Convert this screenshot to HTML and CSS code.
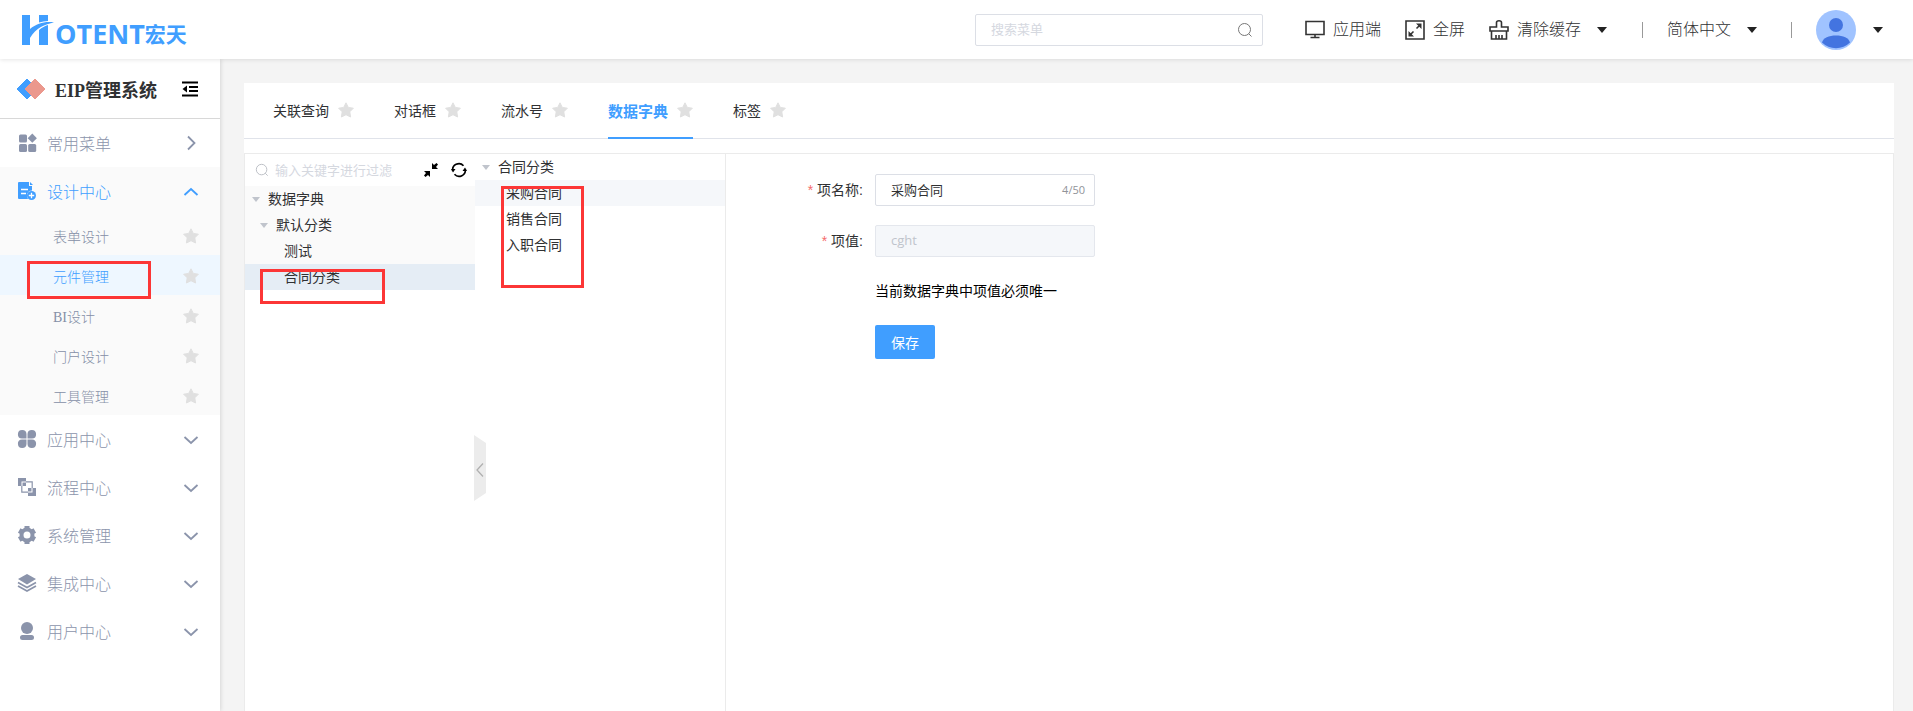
FILE: index.html
```
<!DOCTYPE html>
<html lang="zh-CN">
<head>
    <meta charset="UTF-8">
    <meta name="viewport" content="width=device-width, initial-scale=1.0">
    <title>EIP管理系统</title>
    <link rel="stylesheet" href="styles.css">
</head>
<body>

<svg class="sprite" aria-hidden="true">
    <symbol id="star" viewBox="0 0 16 16"><path d="M8 .8l2.300 4.600 5.100.8-3.600 3.600.8 5.200L8 12.700l-4.600 2.300.8-5.200L.6 6.200l5.100-.8z" fill="#e0e0e0" stroke="#e0e0e0" stroke-linejoin="round"/></symbol>
    <symbol id="down" viewBox="0 0 16 16"><path d="M1.500 6L8 12l6.500-6" fill="none" stroke="currentColor" stroke-width="1.800"/></symbol>
    <symbol id="up" viewBox="0 0 16 16"><path d="M1.500 12L8 6l6.500 6" fill="none" stroke="currentColor" stroke-width="1.800"/></symbol>
    <symbol id="right" viewBox="0 0 16 16"><path d="M5 1.500L11.500 8 5 14.500" fill="none" stroke="currentColor" stroke-width="1.800"/></symbol>
    <symbol id="search" viewBox="0 0 16 16"><circle cx="7.500" cy="7.500" r="6" fill="none" stroke="currentColor"/><path d="M11.700 11.700L14.500 14.500" stroke="currentColor"/></symbol>
</svg>

<header class="topbar">
    <a class="logo" href="#" aria-label="HOTENT宏天">
        <svg width="34" height="32" viewBox="0 0 34 32" fill="#409eff">
            <path d="M1 1h8v14C16 9 25 7 33 8.500 24 10 15 14 9 24v7H1z"/>
            <path d="M18 1h9v6c-3 0-6 .5-9 1.500zM18 16c3-2.500 6-4 9-5V31h-9z"/>
        </svg>
        <span class="logo-en">OTENT</span><span class="logo-cn">宏天</span>
    </a>
    <div class="top-search">
        <input type="text" placeholder="搜索菜单" aria-label="搜索菜单">
        <svg class="i16"><use href="#search"/></svg>
    </div>
    <nav class="top-actions">
        <button class="action">
            <svg width="20" height="20" viewBox="0 0 20 20" fill="none" stroke="#333" stroke-width="1.600"><path d="M1 1.500h18v13H1zM10 14.500v3M5.500 17.500h9"/></svg>
            应用端
        </button>
        <button class="action">
            <svg width="20" height="20" viewBox="0 0 20 20" fill="none" stroke="#333" stroke-width="1.600"><path d="M1 1h18v18H1zM11.500 8.500l4-4M8.500 11.500l-4 4"/><path d="M11 3.500h5.500V9zM3.500 11v5.500H9z" fill="#333" stroke="none"/></svg>
            全屏
        </button>
        <button class="action clear">
            <svg width="20" height="20" viewBox="0 0 20 20" fill="none" stroke="#333" stroke-width="1.600"><path d="M1 11V7h6.500V2.500q0-1.700 2.500-1.700t2.500 1.700V7H19v4zM2.500 11v8h15v-8M7 19v-4M10 19v-4M13 19v-4"/></svg>
            清除缓存
            <i class="caret"></i>
        </button>
        <span class="line"></span>
        <button class="action lang">简体中文 <i class="caret"></i></button>
        <span class="line"></span>
        <button class="action user" aria-label="用户">
            <svg width="40" height="40" viewBox="0 0 40 40"><circle cx="20" cy="20" r="20" fill="#a0c3ff"/><circle cx="20" cy="15" r="7" fill="#4374e0"/><path d="M6 32.500C7 28 13 25.500 20 25.500S33 28 34 32.500A20 20 0 0 1 6 32.500z" fill="#4374e0"/></svg>
            <i class="caret"></i>
        </button>
    </nav>
</header>

<div class="layout">
    <aside class="sidebar">
        <div class="system">
            <svg width="30" height="22" viewBox="0 0 30 22"><path d="M11 1l10 10-10 10L1 11z" fill="#409eff" stroke="#409eff" stroke-linejoin="round"/><path d="M19 1l10 10-10 10L9 11z" fill="#eb988d" stroke="#eb988d" stroke-linejoin="round"/></svg>
            <h1>EIP管理系统</h1>
            <button class="fold" aria-label="收起菜单">
                <svg width="16" height="16" viewBox="0 0 16 16"><path d="M0 1.500h16M7 6h9M7 10h9M0 14.500h16" stroke="#000" stroke-width="2"/><path d="M5 4.500v7L.5 8z"/></svg>
            </button>
        </div>
        <nav>
            <a class="menu" href="#">
                <svg width="20" height="20" viewBox="0 0 20 20" fill="currentColor"><rect x="2" y="1.500" width="8" height="8" rx="1.500"/><rect x="2" y="11" width="8" height="8" rx="1.500"/><rect x="11.200" y="11" width="8" height="8" rx="1.500"/><path d="M15.300.6l4.600 4.600-4.600 4.600-4.600-4.600z"/></svg>
                <span>常用菜单</span>
                <svg class="i16"><use href="#right"/></svg>
            </a>
            <div class="opened">
                <a class="menu active" href="#">
                    <svg width="20" height="20" viewBox="0 0 20 20"><path d="M2 1h10v4h3v4.500a5.200 5.200 0 0 0-4 8.500H2q-1 0-1-1V2q0-1 1-1z" fill="currentColor"/><path d="M13 1l3 3h-3z" fill="currentColor"/><path d="M4 8.500h7M4 12.500h5" stroke="#fff" stroke-width="1.300"/><circle cx="14.500" cy="14.500" r="4.500" fill="currentColor"/><path d="M14.500 11.800v5.400M11.800 14.500h5.400" stroke="#fff" stroke-width="1.300"/></svg>
                    <span>设计中心</span>
                    <svg class="i16"><use href="#up"/></svg>
                </a>
                <a class="sub" href="#"><span>表单设计</span><svg class="i16"><use href="#star"/></svg></a>
                <a class="sub current" href="#"><span>元件管理</span><svg class="i16"><use href="#star"/></svg><i class="mark mark-menu"></i></a>
                <a class="sub" href="#"><span>BI设计</span><svg class="i16"><use href="#star"/></svg></a>
                <a class="sub" href="#"><span>门户设计</span><svg class="i16"><use href="#star"/></svg></a>
                <a class="sub" href="#"><span>工具管理</span><svg class="i16"><use href="#star"/></svg></a>
            </div>
            <a class="menu" href="#">
                <svg width="20" height="20" viewBox="0 0 20 20" fill="currentColor"><path d="M9.500 9.500H5A4.300 4.300 0 1 1 9.500 5zM10.500 9.500V5A4.300 4.300 0 1 1 15 9.500zM9.500 10.500V15A4.300 4.300 0 1 1 5 10.500zM10.500 10.500H15A4.300 4.300 0 1 1 10.500 15z"/></svg>
                <span>应用中心</span>
                <svg class="i16"><use href="#down"/></svg>
            </a>
            <a class="menu" href="#">
                <svg width="20" height="20" viewBox="0 0 20 20"><path d="M1 1h8v3.500H4.500V9H1zM19 19h-8v-3.500h4.500V11H19zM5.500 5.500H9V9H5.500zM11 11h3.500v3.500H11z" fill="currentColor"/><path d="M9 4.800h6.200V11M4.800 9v6.200H11" fill="none" stroke="currentColor" stroke-width="1.200"/></svg>
                <span>流程中心</span>
                <svg class="i16"><use href="#down"/></svg>
            </a>
            <a class="menu" href="#">
                <svg width="20" height="20" viewBox="0 0 20 20"><circle cx="10" cy="10" r="5.500" fill="none" stroke="currentColor" stroke-width="4"/><path d="M10 1v3M10 16v3M2.200 5.500l2.600 1.500M15.200 13l2.600 1.500M2.200 14.500l2.600-1.500M15.200 7l2.600-1.500" stroke="currentColor" stroke-width="5"/></svg>
                <span>系统管理</span>
                <svg class="i16"><use href="#down"/></svg>
            </a>
            <a class="menu" href="#">
                <svg width="20" height="20" viewBox="0 0 20 20"><path d="M10 1l9 5-9 5.500L1 6z" fill="currentColor"/><path d="M1 9.500l9 5 9-5M1 13l9 5 9-5" fill="none" stroke="currentColor" stroke-width="1.700"/></svg>
                <span>集成中心</span>
                <svg class="i16"><use href="#down"/></svg>
            </a>
            <a class="menu" href="#">
                <svg width="20" height="20" viewBox="0 0 20 20" fill="currentColor"><circle cx="10" cy="7" r="6"/><rect x="3" y="14" width="14" height="5" rx="2.500"/></svg>
                <span>用户中心</span>
                <svg class="i16"><use href="#down"/></svg>
            </a>
        </nav>
    </aside>

    <main class="card">
        <nav class="tabs">
            <a href="#">关联查询<svg class="i16"><use href="#star"/></svg></a>
            <a href="#">对话框<svg class="i16"><use href="#star"/></svg></a>
            <a href="#">流水号<svg class="i16"><use href="#star"/></svg></a>
            <a class="active" href="#">数据字典<svg class="i16"><use href="#star"/></svg></a>
            <a href="#">标签<svg class="i16"><use href="#star"/></svg></a>
        </nav>

        <div class="panel">
            <section class="types">
                <div class="filter">
                    <svg class="i14"><use href="#search"/></svg>
                    <input type="text" placeholder="输入关键字进行过滤" aria-label="输入关键字进行过滤">
                    <button aria-label="全部收起">
                        <svg width="16" height="16" viewBox="0 0 16 16"><path d="M9 1v6h6l-2-2 2-2.500L13.500 1 11 3zM7 15V9H1l2 2-2 2.500L2.500 15 5 13z"/></svg>
                    </button>
                    <button aria-label="刷新">
                        <svg width="16" height="16" viewBox="0 0 16 16"><path d="M1.800 9A6.200 6.200 0 0 1 12.500 3.700M14.200 7A6.200 6.200 0 0 1 3.500 12.300" fill="none" stroke="#000" stroke-width="1.700"/><path d="M0 7h4.500L2 10.500zM16 9h-4.500L14 5.500z"/></svg>
                    </button>
                </div>
                <ul class="tree gray">
                    <li><i class="arrow"></i><span>数据字典</span></li>
                    <li class="level2"><i class="arrow"></i><span>默认分类</span></li>
                    <li class="level3"><span>测试</span></li>
                    <li class="level3 selected"><span>合同分类</span><i class="mark mark-type"></i></li>
                </ul>
                <button class="handle" aria-label="收起">
                    <svg width="8" height="14" viewBox="0 0 8 14"><path d="M7 .5L1 7l6 6.500" fill="none" stroke="#b0b0b0" stroke-width="1.300"/></svg>
                </button>
            </section>
            <section class="items">
                <ul class="tree">
                    <li><i class="arrow"></i><span>合同分类</span></li>
                    <li class="level2 hovered"><span>采购合同</span><i class="mark mark-items"></i></li>
                    <li class="level2"><span>销售合同</span></li>
                    <li class="level2"><span>入职合同</span></li>
                </ul>
            </section>
            <form class="detail">
                <label for="name"><b>*</b> 项名称:</label>
                <div class="field">
                    <input type="text" id="name" value="采购合同" maxlength="50">
                    <span class="count">4/50</span>
                </div>
                <label for="code"><b>*</b> 项值:</label>
                <div class="field">
                    <input type="text" id="code" value="cght" disabled>
                </div>
                <p class="hint">当前数据字典中项值必须唯一</p>
                <button type="button" class="save">保存</button>
            </form>
        </div>
    </main>
</div>

</body>
</html>
```
FILE: styles.css
```
* {
    box-sizing: border-box;
}

body {
    margin: 0;
    min-height: 100vh;
    display: flex;
    flex-direction: column;
    font-family: "Liberation Sans", "Noto Sans CJK SC", sans-serif;
    font-size: 14px;
    color: #303133;
    background: #f4f4f4;
}

a {
    color: inherit;
    text-decoration: none;
}

button,
input {
    font: inherit;
    color: inherit;
}

button {
    padding: 0;
    border: none;
    background: none;
    cursor: pointer;
}

svg {
    flex: none;
    display: block;
}

input::placeholder {
    color: #d5d8df;
    opacity: 1;
}

.sprite {
    position: absolute;
    width: 0;
    height: 0;
}

.i16 {
    width: 16px;
    height: 16px;
}

.i14 {
    width: 14px;
    height: 14px;
}

/* top bar */
.topbar {
    position: relative;
    z-index: 2;
    height: 59px;
    display: flex;
    align-items: center;
    padding: 0 30px 0 21px;
    background: #fff;
    box-shadow: 0 1px 4px rgba(0, 0, 0, 0.1);
}

.logo {
    display: flex;
    align-items: center;
    color: #409eff;
    line-height: 30px;
}

.logo-en {
    font-family: "Open Sans", sans-serif;
    font-size: 27px;
    font-weight: 700;
    padding-top: 8px;
}

.logo-cn {
    font-size: 21px;
    font-weight: 700;
    padding-top: 10px;
}

.top-search {
    position: relative;
    width: 288px;
    margin-left: auto;
    margin-right: 42px;
}

.top-search input {
    display: block;
    width: 100%;
    height: 32px;
    padding: 0 40px 0 15px;
    border: 1px solid #dcdfe6;
    border-radius: 2px;
    font-size: 13px;
}

.top-search svg {
    position: absolute;
    right: 10px;
    top: 8px;
    color: #777;
}

.top-actions,
.action {
    display: flex;
    align-items: center;
}

.action {
    gap: 8px;
    margin-right: 24px;
    font-size: 16px;
    font-weight: 300;
    line-height: 24px;
}

.clear {
    margin-right: 35px;
}

.clear .caret,
.lang .caret {
    margin-left: 8px;
}

.lang {
    margin: 0 34px 0 24px;
}

.user {
    gap: 17px;
    margin: 0 0 0 24px;
}

.caret {
    border: 5px solid transparent;
    border-top: 6px solid #222;
    border-bottom: none;
}

.line {
    width: 1px;
    height: 16px;
    background: #999;
}

/* sidebar */
.layout {
    flex: 1;
    display: flex;
}

.sidebar {
    position: relative;
    width: 220px;
    flex: none;
    background: #fff;
    box-shadow: 1px 0 4px rgba(0, 0, 0, 0.12);
    font-weight: 300;
}

.system {
    display: flex;
    align-items: center;
    height: 60px;
    padding: 0 22px 0 16px;
    border-bottom: 1px solid #d8d8d8;
}

.system h1 {
    margin: 0 auto 0 9px;
    font-family: "Liberation Serif", "Noto Sans CJK SC", serif;
    font-size: 18px;
    font-weight: 700;
}

.menu {
    display: flex;
    align-items: center;
    height: 48px;
    padding: 0 21px 0 17px;
    font-size: 16px;
    color: #8b94ab;
}

.menu span {
    flex: 1;
    margin-left: 10px;
}

.opened {
    background: #fafafa;
}

.menu.active {
    color: #409eff;
}

.sub {
    position: relative;
    display: flex;
    align-items: center;
    justify-content: space-between;
    height: 40px;
    padding: 2px 21px 0 53px;
    font-family: "Liberation Serif", "Noto Sans CJK SC", serif;
    color: #858fa7;
}

.sub.current {
    color: #409eff;
    background: #eef7ff;
}

/* red frames over the highlighted entries */
.mark {
    position: absolute;
    z-index: 1;
    border: 3px solid #fc3636;
    pointer-events: none;
}

.mark-menu {
    left: 27px;
    top: 6px;
    width: 124px;
    height: 38px;
}

.mark-type {
    left: 15px;
    top: 5px;
    width: 125px;
    height: 35px;
}

.mark-items {
    left: 26px;
    top: 6px;
    width: 83px;
    height: 102px;
}

/* content */
.card {
    flex: 1;
    display: flex;
    flex-direction: column;
    margin: 24px 19px 0 24px;
    background: #fff;
}

.tabs {
    display: flex;
    gap: 40px;
    height: 56px;
    padding: 0 29px;
    border-bottom: 1px solid #e0e3ea;
}

.tabs a {
    display: flex;
    align-items: center;
    gap: 9px;
    height: 56px;
    border-bottom: 2px solid transparent;
}

.tabs .active {
    font-size: 15px;
    font-weight: 700;
    color: #409eff;
    border-color: #409eff;
}

.panel {
    flex: 1;
    display: flex;
    margin-top: 14px;
    border: 1px solid #ebebeb;
    border-bottom: none;
}

.types {
    position: relative;
    width: 230px;
}

.filter {
    display: flex;
    align-items: center;
    height: 32px;
    padding: 0 8px 0 10px;
}

.filter input {
    flex: 1;
    min-width: 0;
    padding: 0 6px;
    border: none;
    font-size: 13px;
}

.filter svg {
    color: #b5b8bf;
}

.filter button {
    margin-left: 12px;
}

.filter button svg {
    color: #000;
}

.tree {
    margin: 0;
    padding: 0;
    list-style: none;
}

.tree li {
    position: relative;
    display: flex;
    align-items: center;
    height: 26px;
    padding-left: 7px;
}

.tree span {
    padding-bottom: 2px;
}

.tree.gray {
    background: #fafafa;
}

.tree .level2 {
    padding-left: 15px;
}

.items .level2 {
    padding-left: 31px;
}

.tree .level3 {
    padding-left: 39px;
}

.tree .selected {
    background: #e5edf5;
}

.tree .hovered {
    background: #f5f7fa;
}

.arrow {
    margin-right: 8px;
    border: 4px solid transparent;
    border-top: 5px solid #c0c4cc;
    border-bottom: none;
}

.handle {
    position: absolute;
    z-index: 1;
    left: 229px;
    top: 281px;
    width: 12px;
    height: 66px;
    padding-top: 4px;
    display: flex;
    align-items: center;
    justify-content: center;
    background: #ececec;
    clip-path: polygon(0 0, 100% 8px, 100% 58px, 0 100%);
}

.items {
    width: 251px;
    border-right: 1px solid #ebebeb;
}

.detail {
    flex: 1;
    display: grid;
    grid-template-columns: 137px 220px;
    grid-auto-rows: 32px;
    gap: 19px 12px;
    align-content: start;
    padding-top: 20px;
}

.detail label {
    text-align: right;
    line-height: 32px;
}

.detail label b {
    color: #f56c6c;
    font-weight: 400;
}

.field {
    position: relative;
}

.field input {
    width: 100%;
    height: 32px;
    padding: 0 15px 2px;
    border: 1px solid #dcdfe6;
    border-radius: 2px;
    font-family: "Open Sans", "Noto Sans CJK SC", sans-serif;
    font-size: 13px;
}

.field input:disabled {
    color: #c0c4cc;
    background: #f5f7fa;
    border-color: #e4e7ed;
}

.count {
    position: absolute;
    right: 10px;
    top: 0;
    font-family: "Open Sans", sans-serif;
    font-size: 11px;
    line-height: 32px;
    color: #909399;
}

.hint,
.save {
    grid-column: 2;
}

.hint {
    margin: 0;
    line-height: 30px;
    color: #000;
}

.save {
    width: 60px;
    height: 34px;
    margin-top: -2px;
    border-radius: 2px;
    color: #fff;
    background: #409eff;
}
```
